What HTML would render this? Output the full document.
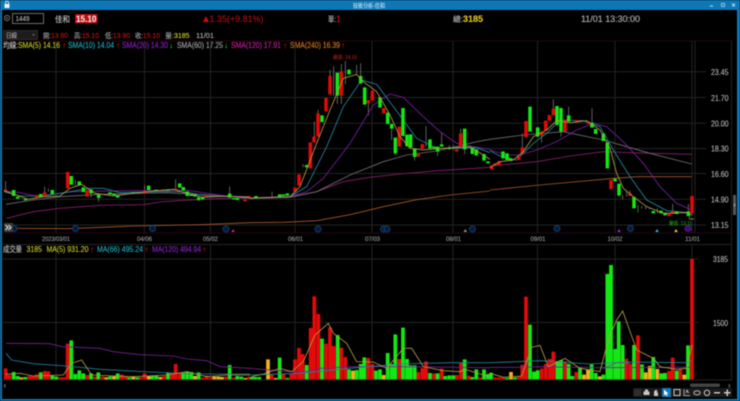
<!DOCTYPE html>
<html><head><meta charset="utf-8"><style>
html,body{margin:0;padding:0;background:#000;width:740px;height:401px;overflow:hidden}
svg{display:block;filter:blur(.45px)}
text{font-family:"Liberation Sans","Noto Sans CJK TC",sans-serif;font-size:8px;stroke:currentColor;stroke-width:.12px}
.l{fill:none;stroke-width:2.6}
.w{fill:none;stroke:#8a8a8a;stroke-width:2}
.r{fill:none;stroke:#e20a0a;stroke-width:10.5}
.g{fill:none;stroke:#14e814;stroke-width:10.5}
.y{fill:none;stroke:#f0b41c;stroke-width:10.5}
.v .r,.v .g,.v .y{stroke-width:11.2}
.c1{stroke:#b09a44}.c2{stroke:#23859c}.c3{stroke:#74209a}.c4{stroke:#707070}.c5{stroke:#8a1e70}.c6{stroke:#a85824}
</style></head><body>
<svg width="740" height="401" viewBox="0 0 740 401" xmlns="http://www.w3.org/2000/svg">
<rect width="740" height="401" fill="#000"/>
<!-- window frame -->
<rect width="740" height="10" fill="#0e78b6"/>
<rect x="0" y="0" width="2" height="401" fill="#0e78b6"/>
<rect x="737" y="0" width="3" height="401" fill="#0e78b6"/>
<rect x="0" y="399" width="740" height="2" fill="#0e78b6"/>
<rect x="4.5" y="4" width="5" height="4" fill="#e8f2f8"/>
<path d="M5.5 4V2.6a1.5 1.5 0 0 1 3 0V4" fill="none" stroke="#e8f2f8" stroke-width=".8"/>
<text x="353" y="7.8" fill="#bfe0f2" color="#bfe0f2" style="font-size:6px" textLength="32" lengthAdjust="spacingAndGlyphs">技術分析-佳和</text>
<path d="M710 6h3" stroke="#bfe0f2" stroke-width="1"/>
<rect x="721.5" y="3.5" width="3" height="3" fill="none" stroke="#bfe0f2" stroke-width=".7"/>
<path d="M732 3.5l3 3M735 3.5l-3 3" stroke="#e8f2f8" stroke-width=".8"/>
<!-- row 1 -->
<circle cx="7" cy="18" r="2.6" fill="none" stroke="#999" stroke-width=".7"/>
<path d="M6.3 16.8l1.6 1.2-1.6 1.2z" fill="#999"/>
<rect x="12.5" y="13.5" width="31" height="10" fill="#000" stroke="#888" stroke-width=".8"/>
<text x="15.5" y="21" fill="#b8b8b8" color="#b8b8b8" textLength="14" lengthAdjust="spacingAndGlyphs" style="font-size:7px">1449</text>
<text x="55" y="22" fill="#c4c4c4" color="#c4c4c4" style="font-size:8px" textLength="15" lengthAdjust="spacingAndGlyphs">佳和</text>
<rect x="75" y="14" width="22.5" height="9.5" fill="#b80c0c"/>
<text x="76" y="22" fill="#f2e4e4" color="#f2e4e4" style="font-size:9px;font-weight:bold" textLength="20.5" lengthAdjust="spacingAndGlyphs">15.10</text>
<path d="M203 22l3-6 3 6z" fill="#c41010"/>
<text x="209.500" y="22" fill="#a81414" color="#a81414" style="font-size:9px" textLength="54" lengthAdjust="spacingAndGlyphs">1.35(+9.81%)</text>
<text x="328" y="22" fill="#bcbcbc" color="#bcbcbc" style="font-size:8px" textLength="8" lengthAdjust="spacingAndGlyphs">單:</text>
<text x="336" y="22" fill="#c81414" color="#c81414" style="font-size:9px">1</text>
<text x="453" y="22" fill="#bcbcbc" color="#bcbcbc" style="font-size:8px" textLength="10" lengthAdjust="spacingAndGlyphs">總:</text>
<text x="463" y="22" fill="#e2c81c" color="#e2c81c" style="font-size:9px;font-weight:bold" textLength="20" lengthAdjust="spacingAndGlyphs">3185</text>
<text x="581" y="22" fill="#b4b4b4" color="#b4b4b4" style="font-size:9px" textLength="59" lengthAdjust="spacingAndGlyphs">11/01 13:30:00</text>
<!-- row 2 -->
<rect x="3.500" y="30.500" width="34" height="9" fill="#1c1c1c" stroke="#3c3c3c" stroke-width=".6"/>
<text x="6" y="37.500" fill="#aaa" color="#aaa" style="font-size:6.5px" textLength="11" lengthAdjust="spacingAndGlyphs">日線</text>
<path d="M32 34.200h3l-1.500 1.600z" fill="#777"/>
<g style="font-size:7px">
<text x="43" y="38" fill="#aaa" color="#aaa" style="font-size:7px" textLength="8" lengthAdjust="spacingAndGlyphs">開:</text><text x="51" y="38" fill="#c81414" color="#c81414" style="font-size:7px" textLength="17" lengthAdjust="spacingAndGlyphs">13.90</text>
<text x="74" y="38" fill="#aaa" color="#aaa" style="font-size:7px" textLength="8" lengthAdjust="spacingAndGlyphs">高:</text><text x="82" y="38" fill="#c81414" color="#c81414" style="font-size:7px" textLength="17" lengthAdjust="spacingAndGlyphs">15.10</text>
<text x="105" y="38" fill="#aaa" color="#aaa" style="font-size:7px" textLength="8" lengthAdjust="spacingAndGlyphs">低:</text><text x="113" y="38" fill="#c81414" color="#c81414" style="font-size:7px" textLength="17" lengthAdjust="spacingAndGlyphs">13.90</text>
<text x="135" y="38" fill="#aaa" color="#aaa" style="font-size:7px" textLength="8" lengthAdjust="spacingAndGlyphs">收:</text><text x="143" y="38" fill="#c81414" color="#c81414" style="font-size:7px" textLength="17" lengthAdjust="spacingAndGlyphs">15.10</text>
<text x="165" y="38" fill="#aaa" color="#aaa" style="font-size:7px" textLength="9" lengthAdjust="spacingAndGlyphs">量:</text><text x="174" y="38" fill="#d8d81c" color="#d8d81c" style="font-size:7px" textLength="15.500" lengthAdjust="spacingAndGlyphs">3185</text>
<text x="196" y="38" fill="#b4b4b4" color="#b4b4b4" style="font-size:7px" textLength="18" lengthAdjust="spacingAndGlyphs">11/01</text>
</g>
<!-- row 3 -->
<line x1="2" y1="41" x2="732" y2="41" stroke="#3a0a12" stroke-width=".8"/>
<text x="3" y="48" fill="#c8c8c8" color="#c8c8c8" textLength="15" lengthAdjust="spacingAndGlyphs">均線:</text>
<text x="18" y="48" fill="#cfcf22" color="#cfcf22" textLength="42" lengthAdjust="spacingAndGlyphs">SMA(5) 14.16</text><text x="62" y="48" fill="#c81414" color="#c81414">↑</text>
<text x="68" y="48" fill="#1fb2c6" color="#1fb2c6" textLength="46" lengthAdjust="spacingAndGlyphs">SMA(10) 14.04</text><text x="116" y="48" fill="#c81414" color="#c81414">↑</text>
<text x="122" y="48" fill="#8e22cc" color="#8e22cc" textLength="46" lengthAdjust="spacingAndGlyphs">SMA(20) 14.30</text><text x="169" y="48" fill="#14b814" color="#14b814">↓</text>
<text x="177" y="48" fill="#a8a8a8" color="#a8a8a8" textLength="46" lengthAdjust="spacingAndGlyphs">SMA(60) 17.25</text><text x="224" y="48" fill="#14b814" color="#14b814">↓</text>
<text x="231" y="48" fill="#cc22a0" color="#cc22a0" textLength="50" lengthAdjust="spacingAndGlyphs">SMA(120) 17.91</text><text x="283" y="48" fill="#c81414" color="#c81414">↑</text>
<text x="290" y="48" fill="#dd7f1c" color="#dd7f1c" textLength="50" lengthAdjust="spacingAndGlyphs">SMA(240) 16.39</text><text x="341" y="48" fill="#c81414" color="#c81414">↑</text>
<!-- grid -->
<g stroke="#232323" stroke-width="1" fill="none">
<path d="M2.500 71.700H706M2.500 97.500H706M2.500 123.300H706M2.500 148.500H706M2.500 173.500H706M2.500 199.300H706M2.500 225H706"/>
<path d="M56 41V233M144.500 41V233M210.500 41V233M295 41V233M372 41V233M453 41V233M537.500 41V233M615 41V233M692 41V233M695 41V233"/>
<path d="M56 245V380M144.500 245V380M210.500 245V380M295 245V380M372 245V380M453 245V380M537.500 245V380M615 245V380M692 245V380"/>
<path d="M2.500 259H698M2.500 322.500H698M2.500 244.500H732M731.500 41V380M2.500 380H732"/>
</g>
<line x1="2" y1="233" x2="732" y2="233" stroke="#34081c" stroke-width=".8"/>
<!-- right labels -->
<g fill="#b8b8b8" color="#b8b8b8">
<text x="711" y="75" textLength="17.500" lengthAdjust="spacingAndGlyphs">23.45</text>
<text x="711" y="100.800" textLength="17.500" lengthAdjust="spacingAndGlyphs">21.70</text>
<text x="711" y="126.500" textLength="17.500" lengthAdjust="spacingAndGlyphs">20.00</text>
<text x="711" y="151.700" textLength="17.500" lengthAdjust="spacingAndGlyphs">18.30</text>
<text x="711" y="176.800" textLength="17.500" lengthAdjust="spacingAndGlyphs">16.60</text>
<text x="711" y="202.300" textLength="17.500" lengthAdjust="spacingAndGlyphs">14.90</text>
<text x="711" y="228" textLength="17.500" lengthAdjust="spacingAndGlyphs">13.15</text>
<text x="713" y="262" textLength="15" lengthAdjust="spacingAndGlyphs">3185</text>
<text x="713" y="326" textLength="15" lengthAdjust="spacingAndGlyphs">1500</text>
</g>
<!-- date labels -->
<g fill="#9c9c9c" color="#9c9c9c">
<text style="font-size:6.500px" x="42" y="241" textLength="28" lengthAdjust="spacingAndGlyphs">2023/03/01</text>
<text style="font-size:6.500px" x="137" y="241" textLength="15" lengthAdjust="spacingAndGlyphs">04/06</text>
<text style="font-size:6.500px" x="203" y="241" textLength="15" lengthAdjust="spacingAndGlyphs">05/02</text>
<text style="font-size:6.500px" x="288" y="241" textLength="15" lengthAdjust="spacingAndGlyphs">06/01</text>
<text style="font-size:6.500px" x="365" y="241" textLength="15" lengthAdjust="spacingAndGlyphs">07/03</text>
<text style="font-size:6.500px" x="446" y="241" textLength="15" lengthAdjust="spacingAndGlyphs">08/01</text>
<text style="font-size:6.500px" x="530.500" y="241" textLength="15" lengthAdjust="spacingAndGlyphs">09/01</text>
<text style="font-size:6.500px" x="607.500" y="241" textLength="15" lengthAdjust="spacingAndGlyphs">10/02</text>
<text style="font-size:6.500px" x="685" y="241" textLength="15" lengthAdjust="spacingAndGlyphs">11/01</text>
</g>
<!-- chart part 1 -->
<g transform="matrix(.33333 0 0 .33333 0 60)">
<path class="w" d="M17 363V392M134 380V408M145 385V395M226 360V376M273 400V412M296 414V425M434 376V392M527 358V386M689 380V401M596 408V424"/>
<path class="l c6" d="M45 505L200 506L400 498L600 494L750 488"/>
<path class="l c5" d="M20 475L100 455L180 445L300 436L430 434L480 426L550 421L650 416L750 414"/>
<path class="l c4" d="M18 433L100 420L180 410L300 403L500 398L680 408L750 415"/>
<path class="l c3" d="M12 393L60 398L110 408L220 395L400 392L560 390L620 400L680 408L750 410"/>
<path class="l c2" d="M12 395L60 408L130 408L210 395L270 385L310 385L360 398L500 394L560 396L620 408L750 412"/>
<path class="r" d="M134 397V408M110 405V412M203 336V385M261 390V410M434 392V400M492 388V392M527 386V390M620 407V412M735 418V424M746 408V414M17 388V392"/>
<path class="g" d="M41 390V408M53 410V416M76 417V421M122 402V412M157 390V402M214 348V374M238 364V376M250 382V396M273 388V400M296 404V414M330 397V404M342 400V406M353 405V413M399 397V400M446 377V390M469 389V393M504 388V392M539 370V383M550 381V392M562 394V408M574 404V408M585 403V410M596 412V420M608 412V418M689 401V413M701 414V418M712 414V420"/>
<path class="l c1" d="M12 392L40 402L85 418L130 410L180 408L210 385L245 373L285 400L340 408L400 400L470 392L520 388L560 400L610 412L680 408L750 412"/>
</g>
<!-- chart part 2 -->
<g transform="matrix(.33333 0 0 .33333 250 50)">
<path class="w" d="M66 425V445M159 342V352M193 215V277M204 180V190M240 60V78M251 48V137M262 137V162M274 42V64M274 137V162M286 33V103M320 45V72M332 40V78M355 160V196M425 236V270M436 310V316M494 321V332M528 228V290M575 247V283M563 305V318M632 236V250M644 298V312M598 285V300M610 285V300"/>
<path class="l c6" d="M0 518L100 517L200 512L300 494L400 470L500 449L600 435L720 423"/>
<path class="l c5" d="M0 443L120 440L200 425L280 395L360 382L450 372L560 362L660 356L720 352"/>
<path class="l c4" d="M0 445L120 442L200 425L300 375L400 335L470 315L560 303L620 290L680 275L720 268"/>
<path class="l c3" d="M0 445L120 440L170 425L220 385L300 280L370 165L420 132L460 142L520 200L570 245L620 280L680 292L720 298"/>
<path class="l c2" d="M0 445L120 440L170 410L230 290L280 170L335 90L380 103L430 170L500 265L560 295L620 295L680 293L720 308"/>
<path class="r" d="M135 413V425M147 373V407M181 277V355M192 260V277M204 190V260M228 144V184M240 78V133M274 64V137M355 150V160M367 122V151M401 174V190M448 230V290M505 312V320M517 282V297M632 250V290M620 298V305"/>
<path class="g" d="M18 438V445M89 433V440M100 433V438M112 430V437M170 345V352M216 196V216M262 68V137M297 59V73M332 78V101M344 112V164M390 142V173M413 188V222M425 222V236M436 263V310M459 174V258M471 254V289M482 253V293M494 295V321M540 268V296M552 290V295M563 290V305M575 283V290M598 292V297M644 236V298M667 292V312M679 298V316M702 312V332M714 334V340"/>
<path class="l c1" d="M0 445L120 440L150 410L200 280L240 180L280 85L320 73L340 95L380 125L420 195L450 260L480 295L520 300L580 295L660 290L700 315L720 328"/>
</g>
<!-- chart part 3 -->
<g transform="matrix(.33333 0 0 .33333 490 80)">
<path class="w" d="M97 160V202M190 58V86M155 167V188M236 80V106M306 85V128M213 155V170M398 345V358M410 335V350M420 332V340M444 375V398M548 372V394M595 372V394M455 378V386M467 380V388M479 382V388M502 385V400"/>
<path class="l c6" d="M0 330L150 315L360 296L440 290L605 290"/>
<path class="l c5" d="M0 258L140 245L240 228L340 215L420 218L605 223"/>
<path class="l c4" d="M0 178L100 165L220 155L340 180L480 220L605 252"/>
<path class="l c3" d="M0 210L50 225L90 225L140 210L200 185L260 150L310 130L350 140L400 185L460 250L510 320L560 370L600 388"/>
<path class="l c2" d="M0 212L30 228L80 240L130 190L170 160L210 120L280 122L330 140L370 210L420 290L470 360L530 392L600 398"/>
<path class="r" d="M5 257V268M15 250V258M27 243V255M86 228V240M97 202V222M108 123V172M155 155V167M167 122V152M178 105V122M190 86V106M225 118V155M260 120V128M295 125V132M363 300V327M420 340V348M537 400V408M606 348V400M548 394V402"/>
<path class="g" d="M39 214V235M51 220V240M62 235V243M120 80V155M143 142V170M201 78V135M213 84V155M236 106V125M306 128V143M317 147V162M340 160V183M352 188V265M375 296V304M387 311V347M432 351V385M490 393V400M513 392V400M525 398V406M560 394V402M595 394V408"/>
<path class="l c1" d="M0 262L30 245L70 240L100 215L130 170L170 150L200 122L240 128L290 122L330 150L360 205L380 280L400 325L430 350L470 380L520 400L590 398L607 405"/>
<path d="M598 408V417H612" fill="none" stroke="#9a9a6a" stroke-width="2"/>
</g>
<!-- markers -->
<g fill="#041a38" stroke="#134a80" stroke-width=".8">
<circle cx="14" cy="228.500" r="3"/><circle cx="75.500" cy="228.500" r="3"/><circle cx="152.500" cy="228.500" r="3"/><circle cx="226" cy="229" r="3"/><circle cx="318" cy="229" r="3"/><circle cx="383.500" cy="229" r="3"/><circle cx="387" cy="229" r="3"/><circle cx="472.500" cy="229" r="3"/><circle cx="557" cy="228.500" r="3"/><circle cx="630.500" cy="228.500" r="3"/>
<circle cx="688" cy="228.500" r="3" fill="#3c0c6c" stroke="#6a1ca0"/>
</g>
<path d="M231.200 232l1.800-3 1.800 3z" fill="#d81c8c"/>
<path d="M463.500 232l1.800-3 1.800 3z" fill="#909090"/>
<path d="M617.200 232l1.800-3 1.800 3z" fill="#a022d8"/>
<path d="M655.200 232l1.800-3 1.800 3z" fill="#22b8d8"/>
<path d="M674.200 232l1.800-3 1.800 3z" fill="#e8d820"/>
<text x="333" y="59" fill="#a81c1c" color="#a81c1c" style="font-size:5px" textLength="24" lengthAdjust="spacingAndGlyphs">最高: 24.15</text>
<text x="669" y="225" fill="#1c9c1c" color="#1c9c1c" style="font-size:5px" textLength="23" lengthAdjust="spacingAndGlyphs">最低: 13.11</text>
<!-- left button -->
<rect x="4" y="223" width="9" height="9" fill="#3c3c3c"/>
<path d="M5.500 225l2.500 2.500-2.500 2.500M8.500 225l2.500 2.500-2.500 2.500" fill="none" stroke="#eee" stroke-width="1"/>
<!-- right handle -->
<rect x="733" y="195" width="3" height="20" fill="#555"/>
<path d="M735.300 203.500l-1.200 1.500 1.200 1.500" fill="none" stroke="#ccc" stroke-width=".6"/>
<!-- volume header -->
<text x="3" y="252" fill="#c4c4c4" color="#c4c4c4" textLength="19" lengthAdjust="spacingAndGlyphs">成交量</text>
<text x="26.500" y="252" fill="#cfcf22" color="#cfcf22" textLength="15.500" lengthAdjust="spacingAndGlyphs">3185</text>
<text x="46.500" y="252" fill="#cfcf22" color="#cfcf22" textLength="42" lengthAdjust="spacingAndGlyphs">MA(5) 931.20</text><text x="90" y="252" fill="#c81414" color="#c81414">↑</text>
<text x="97" y="252" fill="#1fb2c6" color="#1fb2c6" textLength="46" lengthAdjust="spacingAndGlyphs">MA(66) 495.24</text><text x="144.500" y="252" fill="#c81414" color="#c81414">↑</text>
<text x="152" y="252" fill="#8e22cc" color="#8e22cc" textLength="49" lengthAdjust="spacingAndGlyphs">MA(120) 494.94</text><text x="202.500" y="252" fill="#c81414" color="#c81414">↑</text>
<!-- volume part 1 -->
<g class="v" transform="matrix(.33333 0 0 .33333 0 240)">
<path class="r" d="M17 385V418M28 405V418M88 408V418M99 408V418M110 403V418M134 393V418M145 394V418M181 412V418M192 412V418M203 311V418M261 405V418M285 410V418M308 410V418M365 404V418M377 410V418M422 412V418M434 400V418M492 408V418M516 400V418M527 372V418M539 400V418M608 413V418M620 407V418M632 412V418M678 410V418M701 413V418M747 410V418"/>
<path class="g" d="M41 396V418M53 408V418M76 411V418M122 397V418M157 405V418M169 410V418M214 301V418M226 402V418M238 391V418M250 400V418M273 400V418M295 397V418M330 409V418M353 400V418M388 412V418M412 412V418M457 408V418M469 407V418M504 399V418M550 398V418M562 394V418M574 396V418M596 397V418M689 375V418M712 408V418M724 410V418"/>
<path class="y" d="M64 412V418M319 412V418M342 409V418M400 409V418M446 409V418M481 411V418M585 408V418M643 410V418M655 410V418M666 411V418M736 414V418"/>
<path class="l c3" d="M18 310L150 311L185 320L300 325L340 335L420 344L520 348L560 357L620 362L660 380L750 385"/>
<path class="l c2" d="M18 340L35 360L100 371L200 378L300 388L450 396L600 402L750 402"/>
<path class="l c1" d="M17 403L60 400L100 408L190 405L215 370L245 360L275 405L400 410L500 405L560 395L620 410L680 405L750 405"/>
</g>
<!-- volume part 2 -->
<g class="v" transform="matrix(.33333 0 0 .33333 250 240)">
<path class="r" d="M65 402V418M100 402V418M124 402V418M135 358V418M147 324V418M158 342V418M182 264V418M193 169V418M205 222V418M228 311V418M240 262V418M251 318V418M274 323V418M286 351V418M355 354V418M367 372V418M448 357V418M505 396V418M517 384V418M528 364V418M552 400V418M575 386V418M621 405V418M633 368V418M656 407V418M691 412V418"/>
<path class="g" d="M5 411V418M16 411V418M28 411V418M89 353V418M112 414V418M170 375V418M216 296V418M263 285V418M297 388V418M320 390V418M332 372V418M343 352V418M378 392V418M390 388V418M413 339V418M425 372V418M436 283V418M459 263V418M471 357V418M482 376V418M494 376V418M540 399V418M563 400V418M586 408V418M598 406V418M610 406V418M644 358V418M667 411V418M679 388V418M702 388V418M714 402V418"/>
<path class="y" d="M54 358V418M77 414V418M309 392V418M401 405V418"/>
<path class="l c3" d="M0 385L120 395L170 395L210 385L300 380L450 380L720 383"/>
<path class="l c2" d="M0 405L150 400L300 385L450 372L600 368L720 368"/>
<path class="l c1" d="M5 410L40 402L90 385L125 395L160 365L195 285L235 250L250 280L290 310L320 365L370 366L410 385L460 325L485 325L520 380L580 392L630 395L645 388L700 405L720 410"/>
</g>
<!-- volume part 3 -->
<g class="v" transform="matrix(.33333 0 0 .33333 490 240)">
<path class="r" d="M15 412V418M27 412V418M39 412V418M87 410V418M97 375V418M108 170V418M155 386V418M167 372V418M179 357V418M190 335V418M225 364V418M259 396V418M409 356V418M421 372V418M444 286V418M537 393V418M548 353V418M571 388V418M606 57V418"/>
<path class="g" d="M3 398V418M51 414V418M75 412V418M120 254V418M132 395V418M143 391V418M202 363V418M213 360V418M236 372V418M247 408V418M270 381V418M305 373V418M317 399V418M340 404V418M352 102V418M363 75V418M375 327V418M386 244V418M398 315V418M432 315V418M456 373V418M490 351V418M514 400V418M525 399V418M560 392V418M594 316V418"/>
<path class="y" d="M63 396V418M282 404V418M294 389V418M329 409V418M467 397V418M479 378V418M502 387V418M583 404V418"/>
<path class="l c3" d="M0 382L100 382L150 380L330 383L600 382"/>
<path class="l c2" d="M0 368L150 362L300 372L400 366L590 368L606 362"/>
<path d="M340 385L380 368L420 370" class="l" stroke="#6a5498"/>
<path class="l c1" d="M0 400L40 412L95 408L125 322L150 316L175 380L225 355L270 385L330 395L355 300L380 240L398 213L440 330L490 355L510 380L560 388L590 385L606 315"/>
</g>
<!-- scrollbar -->
<text x="3.500" y="388" fill="#999" color="#999">‹</text>
<text x="728" y="388" fill="#999" color="#999">›</text>
<rect x="690" y="383.500" width="30" height="3.500" rx="1.500" fill="#444"/>
<!-- toolbar -->
<rect x="633" y="388" width="99" height="9" fill="#1a1a1a"/>
<rect x="662" y="388" width="9" height="9" fill="#1678b8"/>
<g fill="#c8c8c8">
<rect x="634" y="389" width="7" height="7" fill="#2e2e2e"/>
<path d="M643.500 391.500h6v3.500h-6zM645 389.500h3v2h-3z"/>
<path d="M654 396v-4.500l.8-.6V390l.8.300.8-.3.800.3v2.500l.8-.300v3.500z"/>
<path d="M664 389.500v6l1.500-1.300 1 2 1-.5-1-1.800 2-.2z" fill="#fff"/>
<rect x="674" y="389.500" width="6" height="6" fill="none" stroke="#c8c8c8" stroke-width="1"/>
<path d="M684 389.500v6h6M686 393l2-3M686 390l3 3" fill="none" stroke="#c8c8c8" stroke-width=".8"/>
<ellipse cx="697" cy="392.800" rx="3.200" ry="2" fill="none" stroke="#c8c8c8" stroke-width=".9"/>
<circle cx="707" cy="392.800" r="2.700" fill="none" stroke="#c8c8c8" stroke-width="1"/>
<rect x="714" y="392" width="6" height="1.500"/>
<path d="M724 392h2.500v-2.500h1.500v2.500h2.500v1.500h-2.500v2.500h-1.500v-2.500h-2.500z"/>
</g>
</svg>
</body></html>
